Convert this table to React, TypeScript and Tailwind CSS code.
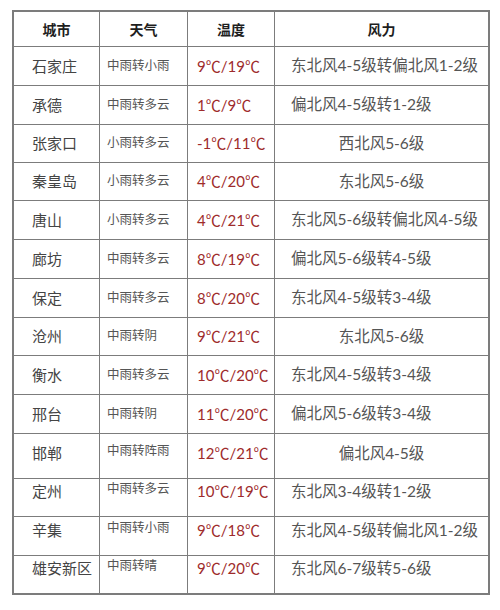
type Row = {
  city: string;
  weather: string;
  temp: string;
  wind: string;
  center?: boolean;
  h: string;
  top?: string;
};

const rows: Row[] = [
  { city: "石家庄", weather: "中雨转小雨", temp: "9℃/19℃", wind: "东北风4-5级转偏北风1-2级", h: "h-[39px]" },
  { city: "承德", weather: "中雨转多云", temp: "1℃/9℃", wind: "偏北风4-5级转1-2级", h: "h-[39px]" },
  { city: "张家口", weather: "小雨转多云", temp: "-1℃/11℃", wind: "西北风5-6级", center: true, h: "h-[38px]" },
  { city: "秦皇岛", weather: "小雨转多云", temp: "4℃/20℃", wind: "东北风5-6级", center: true, h: "h-[38px]" },
  { city: "唐山", weather: "小雨转多云", temp: "4℃/21℃", wind: "东北风5-6级转偏北风4-5级", h: "h-[39px]" },
  { city: "廊坊", weather: "中雨转多云", temp: "8℃/19℃", wind: "偏北风5-6级转4-5级", h: "h-[39px]" },
  { city: "保定", weather: "中雨转多云", temp: "8℃/20℃", wind: "东北风4-5级转3-4级", h: "h-[39px]" },
  { city: "沧州", weather: "中雨转阴", temp: "9℃/21℃", wind: "东北风5-6级", center: true, h: "h-[38px]" },
  { city: "衡水", weather: "中雨转多云", temp: "10℃/20℃", wind: "东北风4-5级转3-4级", h: "h-[39px]" },
  { city: "邢台", weather: "中雨转阴", temp: "11℃/20℃", wind: "偏北风5-6级转3-4级", h: "h-[39px]" },
  { city: "邯郸", weather: "中雨转阵雨", temp: "12℃/21℃", wind: "偏北风4-5级", center: true, h: "h-[45px]", top: "pt-[8px]" },
  { city: "定州", weather: "中雨转多云", temp: "10℃/19℃", wind: "东北风3-4级转1-2级", h: "h-[38px]", top: "pt-[1px]" },
  { city: "辛集", weather: "中雨转小雨", temp: "9℃/18℃", wind: "东北风4-5级转偏北风1-2级", h: "h-[39px]", top: "pt-[2px]" },
  { city: "雄安新区", weather: "中雨转晴", temp: "9℃/20℃", wind: "东北风6-7级转5-6级", h: "h-[39px]", top: "pt-[1px]" },
];

const font = "font-['Lato','Noto_Sans_CJK_SC',sans-serif]";

export default function App() {
  return (
    <div className={`w-[500px] h-[610px] bg-white pt-[10px] pl-[12px] ${font}`}>
      <div className="w-[478px] border-t-2 border-l-2 border-[#7c7c7c]">
        {/* header */}
        <div className="grid grid-cols-[86px_88px_87px_215px] h-[35px] text-[14px] font-bold text-[#1e1e1e]">
          <div className="flex items-center justify-center border-r border-b border-[#7c7c7c]">城市</div>
          <div className="flex items-center justify-center border-r border-b border-[#7c7c7c]">天气</div>
          <div className="flex items-center justify-center border-r border-b border-[#7c7c7c]">温度</div>
          <div className="flex items-center justify-center border-r-2 border-b border-[#7c7c7c]">风力</div>
        </div>

        {rows.map((r, i) => {
          const last = i === rows.length - 1;
          const bb = last ? "border-b-2" : "border-b";
          const align = r.top ? `items-start ${r.top}` : "items-center";
          return (
            <div key={r.city} className={`grid grid-cols-[86px_88px_87px_215px] ${r.h}`}>
              <div className={`flex ${align} pl-[18px] text-[15px] text-[#444] border-r ${bb} border-[#7c7c7c]`}>
                {r.city}
              </div>
              <div className={`flex ${align} pl-[7px] text-[12.5px] text-[#555] border-r ${bb} border-[#7c7c7c]`}>
                {r.weather}
              </div>
              <div className={`flex ${align} pl-[9px] text-[15px] text-[#9e2b2b] border-r ${bb} border-[#7c7c7c]`}>
                {r.temp}
              </div>
              <div
                className={`flex ${align} ${r.center ? "justify-center" : "pl-[16px]"} text-[15.5px] text-[#555] border-r-2 ${bb} border-[#7c7c7c]`}
              >
                {r.wind}
              </div>
            </div>
          );
        })}
      </div>
    </div>
  );
}
